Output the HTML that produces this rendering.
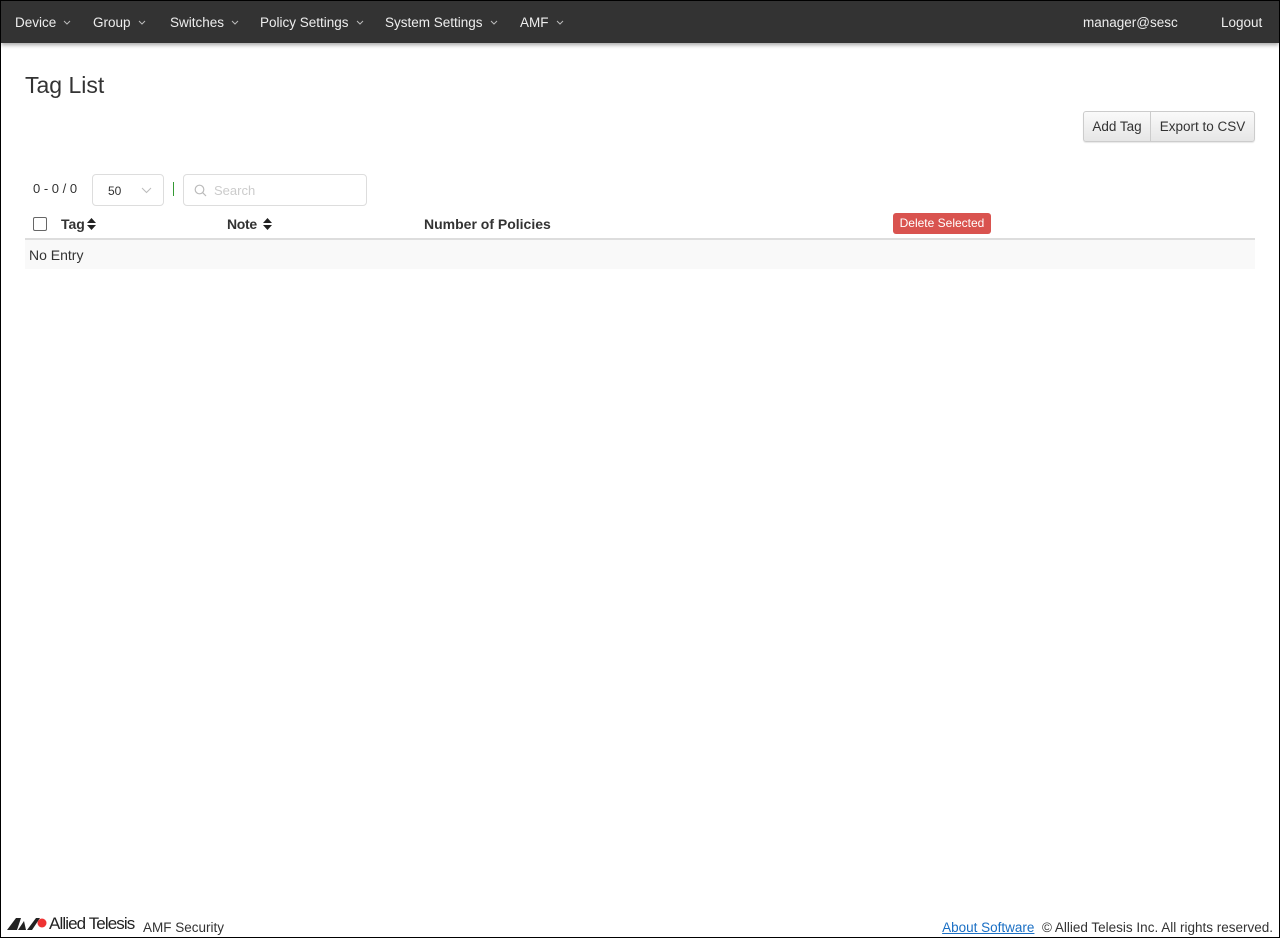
<!DOCTYPE html>
<html><head><meta charset="utf-8"><style>
*{box-sizing:border-box}
html,body{margin:0;width:1280px;height:938px;overflow:hidden;background:#fff;font-family:"Liberation Sans",sans-serif;color:#333}
.frame{position:absolute;left:0;top:0;width:1280px;height:938px;border:1px solid #000}
.nav{position:absolute;left:1px;top:1px;width:1278px;height:42px;background:#333;box-shadow:0 2px 4px rgba(0,0,0,.35);color:#eee;font-size:13.5px}
.nav span{position:absolute;top:14px;white-space:nowrap}
.nav svg{margin-left:7px;vertical-align:2px}
h1{position:absolute;left:25px;top:72px;margin:0;font-weight:normal;font-size:23px;color:#333}
.btns{position:absolute;left:1083px;top:111px;width:172px;height:31px;display:flex;border:1px solid #ccc;border-radius:3px;background:linear-gradient(#fafafa,#e6e6e6);font-size:13.5px;box-shadow:0 1px 1px rgba(0,0,0,.1)}
.btns div{line-height:30px;white-space:nowrap;text-align:center}
.btns div+div{border-left:1px solid #ccc}
.abs{position:absolute;white-space:nowrap}
</style></head><body>
<div class="frame"></div>
<div class="nav">
<span style="left:14px">Device<svg width="8" height="5"><path d="M1 1L4 4L7 1" fill="none" stroke="#bbb"/></svg></span>
<span style="left:92px">Group<svg width="8" height="5"><path d="M1 1L4 4L7 1" fill="none" stroke="#bbb"/></svg></span>
<span style="left:169px">Switches<svg width="8" height="5"><path d="M1 1L4 4L7 1" fill="none" stroke="#bbb"/></svg></span>
<span style="left:259px">Policy Settings<svg width="8" height="5"><path d="M1 1L4 4L7 1" fill="none" stroke="#bbb"/></svg></span>
<span style="left:384px">System Settings<svg width="8" height="5"><path d="M1 1L4 4L7 1" fill="none" stroke="#bbb"/></svg></span>
<span style="left:519px">AMF<svg width="8" height="5"><path d="M1 1L4 4L7 1" fill="none" stroke="#bbb"/></svg></span>
<span style="left:1082px">manager@sesc</span>
<span style="left:1220px">Logout</span>
</div>
<h1>Tag List</h1>
<div class="btns"><div style="width:66px">Add Tag</div><div style="flex:1">Export to CSV</div></div>
<div class="abs" style="left:33px;top:181px;font-size:13px">0 - 0 / 0</div>
<div class="abs" style="left:92px;top:174px;width:72px;height:32px;border:1px solid #ddd;border-radius:4px;font-size:12px;padding:9px 0 0 15px">50<svg style="position:absolute;left:48px;top:12px" width="11" height="7"><path d="M1 1L5.5 5.5L10 1" fill="none" stroke="#bbb"/></svg></div>
<div class="abs" style="left:173px;top:182px;width:1px;height:14px;background:#393"></div>
<div class="abs" style="left:183px;top:174px;width:184px;height:32px;border:1px solid #ddd;border-radius:4px;font-size:13px;color:#ccc;padding:8px 0 0 30px">Search
<svg style="position:absolute;left:10px;top:9px" width="13" height="13" viewBox="0 0 13 13"><circle cx="5.5" cy="5.5" r="4.3" fill="none" stroke="#bbb" stroke-width="1.2"/><line x1="8.6" y1="8.6" x2="12" y2="12" stroke="#bbb" stroke-width="1.2"/></svg></div>
<div class="abs" style="left:33px;top:217px;width:14px;height:14px;border:1.5px solid #666;border-radius:2px"></div>
<div class="abs" style="left:61px;top:216px;font-size:14px;font-weight:bold">Tag</div>
<svg class="abs" style="left:87px;top:217px" width="9" height="14"><path d="M0 6L4.5 1L9 6ZM0 8L4.5 13L9 8Z" fill="#222"/></svg>
<div class="abs" style="left:227px;top:216px;font-size:14px;font-weight:bold;letter-spacing:-0.3px">Note</div>
<svg class="abs" style="left:263px;top:217px" width="9" height="14"><path d="M0 6L4.5 1L9 6ZM0 8L4.5 13L9 8Z" fill="#222"/></svg>
<div class="abs" style="left:424px;top:216px;font-size:14px;font-weight:bold">Number of Policies</div>
<div class="abs" style="left:893px;top:213px;width:98px;height:21px;background:#d9534f;color:#fff;border-radius:3px;font-size:12px;line-height:21px;text-align:center">Delete Selected</div>
<div class="abs" style="left:25px;top:238px;width:1230px;height:2px;background:#ddd"></div>
<div class="abs" style="left:25px;top:240px;width:1230px;height:29px;background:#f9f9f9;font-size:14px;padding:7px 0 0 4px">No Entry</div>
<svg class="abs" style="left:7px;top:916px" width="40" height="14" viewBox="0 0 40 14"><path d="M0 14L9 2H14L10 14ZM11 14L17 5L19 14ZM20 14L29 2H33L25 14Z" fill="#222"/><circle cx="35" cy="7" r="4.5" fill="#e33"/></svg>
<div class="abs" style="left:49px;top:914px;font-size:17px;letter-spacing:-0.9px;color:#222">Allied Telesis</div>
<div class="abs" style="left:143px;top:920px;font-size:13.5px">AMF Security</div>
<div class="abs" style="right:7px;top:920px;font-size:13.5px"><span style="color:#1a6fc4;text-decoration:underline">About Software</span>&nbsp; © Allied Telesis Inc. All rights reserved.</div>
</body></html>
